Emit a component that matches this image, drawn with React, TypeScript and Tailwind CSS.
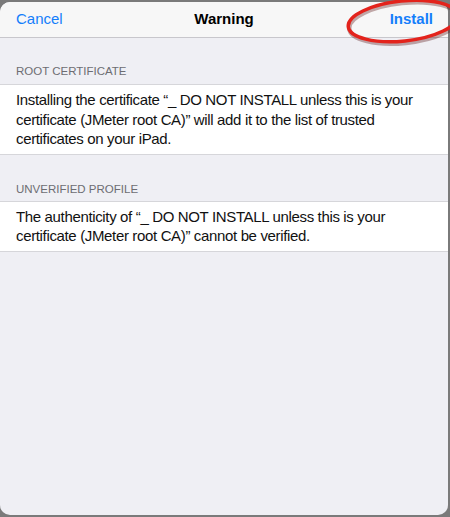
export default function App() {
  return (
    <div className="h-[517px] w-[450px] bg-[#7a7a7a] pt-[2px] pr-[2px] pb-[2px] font-['Liberation_Sans',Arial,sans-serif]">
      <div className="relative flex h-full flex-col overflow-hidden rounded-[10px] bg-[#efeff4]">
        <div className="relative flex h-[36px] items-center justify-center border-b border-[#c8c7cc] bg-[#f7f7f7]">
          <button className="absolute left-[16px] text-[15px] text-[#147efb]">Cancel</button>
          <h1 className="text-[15px] font-semibold text-black">Warning</h1>
          <button className="absolute right-[15px] text-[15px] font-semibold text-[#147efb]">Install</button>
        </div>

        <div className="px-[16px] pt-[26px] pb-[6px] text-[11.5px] leading-[14px] uppercase text-[#6d6d72]">
          Root Certificate
        </div>
        <div className="border-y border-[#d6d6da] bg-white px-[16px] py-[5px] text-[15px] leading-[19.5px] tracking-[-0.35px] text-[#111]">
          Installing the certificate “_ DO NOT INSTALL unless this is your certificate (JMeter root CA)” will add it to the list of trusted certificates on your iPad.
        </div>

        <div className="px-[16px] pt-[27px] pb-[5px] text-[11.5px] leading-[14px] uppercase text-[#6d6d72]">
          Unverified Profile
        </div>
        <div className="border-y border-[#d6d6da] bg-white px-[16px] py-[5px] text-[15px] leading-[19.5px] tracking-[-0.35px] text-[#111]">
          The authenticity of “_ DO NOT INSTALL unless this is your certificate (JMeter root CA)” cannot be verified.
        </div>
      </div>

      <svg className="pointer-events-none absolute left-0 top-0" width="450" height="50" viewBox="0 0 450 50">
        <ellipse cx="404" cy="23" rx="55" ry="20" transform="rotate(-6 404 23)" fill="none" stroke="#5a1010" strokeOpacity="0.35" strokeWidth="4.5" />
        <ellipse cx="403" cy="21" rx="55" ry="20" transform="rotate(-6 403 21)" fill="none" stroke="#e3231c" strokeWidth="3.5" />
      </svg>
    </div>
  );
}
